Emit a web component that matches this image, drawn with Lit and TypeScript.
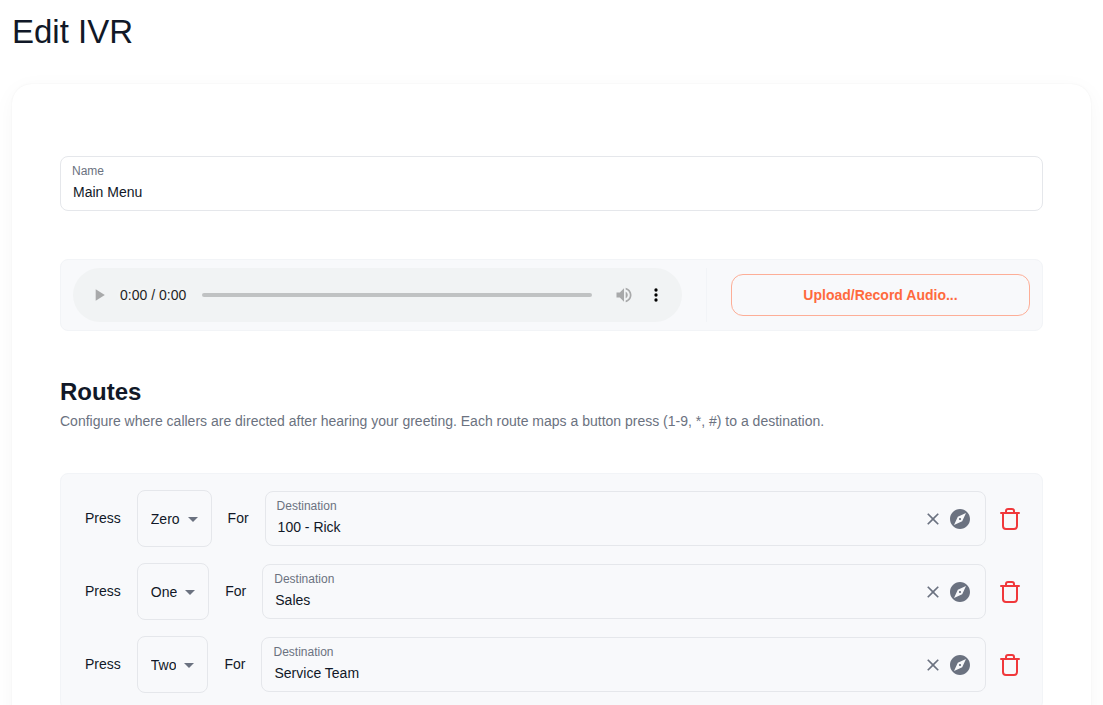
import { LitElement, html, css } from "lit";
import { customElement, property } from "lit/decorators.js";

const KEYS = ["Zero", "One", "Two", "Three", "Four", "Five", "Six", "Seven", "Eight", "Nine", "Star", "Pound"];

interface Route {
  key: string;
  destination: string;
}

@customElement("ivr-route")
export class IvrRoute extends LitElement {
  @property() key = "Zero";
  @property() destination = "";

  static styles = css`
    :host {
      display: flex;
      align-items: center;
      gap: 16px;
    }
    .word {
      padding-bottom: 2px;
      line-height: 20px;
    }
    .picker {
      display: grid;
      align-items: center;
    }
    .picker > * {
      grid-area: 1 / 1;
    }
    select {
      appearance: none;
      field-sizing: content;
      box-sizing: border-box;
      height: 57px;
      margin: 0;
      padding: 0 31px 0 13px;
      border: 1px solid #e5e7eb;
      border-radius: 8px;
      background: transparent;
      color: #111827;
      font: inherit;
    }
    .caret {
      justify-self: end;
      margin-right: 7px;
      fill: #6b7280;
      pointer-events: none;
    }
    .field {
      flex: 1;
      min-width: 0;
      display: flex;
      align-items: center;
      box-sizing: border-box;
      height: 55px;
      padding: 0 13px 0 11px;
      border: 1px solid #e5e7eb;
      border-radius: 8px;
    }
    .entry {
      flex: 1;
      min-width: 0;
      display: flex;
      flex-direction: column;
    }
    .caption {
      color: #6b7280;
      font-size: 12px;
      line-height: 16px;
    }
    input {
      box-sizing: border-box;
      width: 100%;
      height: 26px;
      margin: 0;
      padding: 0 1px;
      border: 0;
      outline: 0;
      background: transparent;
      color: #111827;
      font: inherit;
    }
    button {
      display: grid;
      place-items: center;
      padding: 0;
      border: 0;
      background: none;
      color: #6b7280;
      cursor: pointer;
    }
    .clear {
      margin-right: 5px;
    }
    .remove {
      margin-left: -4px;
      color: #f0383b;
    }
    svg {
      display: block;
    }
  `;

  render() {
    return html`
      <label class="word" for="key">Press</label>
      <span class="picker">
        <select id="key">
          ${KEYS.map((k) => html`<option ?selected=${k === this.key}>${k}</option>`)}
        </select>
        <svg class="caret" width="24" height="24" viewBox="0 0 24 24" aria-hidden="true"><path d="M7 10l5 5 5-5z" /></svg>
      </span>
      <span class="word">For</span>
      <div class="field">
        <div class="entry">
          <label class="caption" for="destination">Destination</label>
          <input id="destination" type="text" .value=${this.destination} />
        </div>
        <button class="clear" type="button" aria-label="Clear destination">
          <svg width="20" height="20" viewBox="0 0 24 24" fill="currentColor">
            <path d="M19 6.41L17.59 5 12 10.59 6.41 5 5 6.41 10.59 12 5 17.59 6.41 19 12 13.41 17.59 19 19 17.59 13.41 12z" />
          </svg>
        </button>
        <button type="button" aria-label="Browse destinations">
          <svg width="24" height="24" viewBox="0 0 24 24" fill="currentColor">
            <path d="M12 10.9c-.61 0-1.1.49-1.1 1.1s.49 1.1 1.1 1.1c.61 0 1.1-.49 1.1-1.1s-.49-1.1-1.1-1.1zM12 2C6.48 2 2 6.48 2 12s4.48 10 10 10 10-4.48 10-10S17.52 2 12 2zm2.19 12.19L6 18l3.81-8.19L18 6l-3.81 8.19z" />
          </svg>
        </button>
      </div>
      <button class="remove" type="button" aria-label="Delete route">
        <svg width="24" height="24" viewBox="0 0 24 24" fill="none" stroke="currentColor" stroke-width="2" stroke-linecap="round" stroke-linejoin="round">
          <path d="M3 6h18M8 6V4a2 2 0 0 1 2-2h4a2 2 0 0 1 2 2v2M19 6v13a3 3 0 0 1-3 3H8a3 3 0 0 1-3-3V6" />
        </svg>
      </button>
    `;
  }
}

@customElement("app-root")
export class AppRoot extends LitElement {
  private routes: Route[] = [
    { key: "Zero", destination: "100 - Rick" },
    { key: "One", destination: "Sales" },
    { key: "Two", destination: "Service Team" },
  ];

  static styles = css`
    :host {
      display: block;
      box-sizing: border-box;
      height: 100vh;
      overflow: hidden;
      padding: 12px 12px 0;
      background: #fff;
      color: #111827;
      font-family: "Liberation Sans", Arial, sans-serif;
      font-size: 14px;
    }
    h1 {
      margin: 0 0 32px;
      font-size: 33px;
      font-weight: 400;
      line-height: 40px;
    }
    .card {
      padding: 72px 48px 48px;
      border-radius: 20px;
      background: #fff;
      box-shadow: 0 0 2px rgba(0, 0, 0, 0.06), 0 5px 22px rgba(0, 0, 0, 0.04);
    }
    .name {
      display: flex;
      flex-direction: column;
      justify-content: center;
      box-sizing: border-box;
      height: 55px;
      padding: 0 11px;
      border: 1px solid #e5e7eb;
      border-radius: 8px;
    }
    .name label {
      color: #6b7280;
      font-size: 12px;
      line-height: 16px;
    }
    .name input {
      box-sizing: border-box;
      height: 26px;
      margin: 0;
      padding: 0 1px;
      border: 0;
      outline: 0;
      background: transparent;
      color: #111827;
      font: inherit;
    }
    .panel {
      border: 1px solid #f2f4f7;
      border-radius: 8px;
      background: #f8f9fb;
    }
    .greeting {
      display: flex;
      align-items: center;
      gap: 24px;
      margin-top: 48px;
      padding: 8px 12px;
    }
    audio {
      flex: 1;
      min-width: 0;
      height: 54px;
    }
    audio::-webkit-media-controls-current-time-display,
    audio::-webkit-media-controls-time-remaining-display {
      font-family: "Liberation Sans", Arial, sans-serif;
    }
    .divider {
      align-self: stretch;
      width: 1px;
      background: #f2f4f7;
    }
    .upload {
      flex: 0 0 299px;
      height: 42px;
      padding: 0;
      border: 1px solid #fdae97;
      border-radius: 12px;
      background: transparent;
      color: #ff6a3d;
      font: inherit;
      font-weight: 700;
      cursor: pointer;
    }
    h2 {
      margin: 46px 0 0;
      font-size: 24px;
      font-weight: 700;
      line-height: 30px;
    }
    .hint {
      margin: 4px 0 0;
      color: #6b7280;
      line-height: 20px;
    }
    .routes {
      display: flex;
      flex-direction: column;
      gap: 16px;
      margin-top: 42px;
      padding: 16px 20px 16px 24px;
    }
  `;

  render() {
    return html`
      <h1>Edit IVR</h1>
      <main class="card">
        <div class="name">
          <label for="name">Name</label>
          <input id="name" type="text" value="Main Menu" />
        </div>
        <div class="panel greeting">
          <audio controls></audio>
          <span class="divider"></span>
          <button class="upload" type="button">Upload/Record Audio...</button>
        </div>
        <h2>Routes</h2>
        <p class="hint">
          Configure where callers are directed after hearing your greeting. Each route maps a button press (1-9, *, #) to a destination.
        </p>
        <div class="panel routes">
          ${this.routes.map((r) => html`<ivr-route .key=${r.key} .destination=${r.destination}></ivr-route>`)}
        </div>
      </main>
    `;
  }
}
